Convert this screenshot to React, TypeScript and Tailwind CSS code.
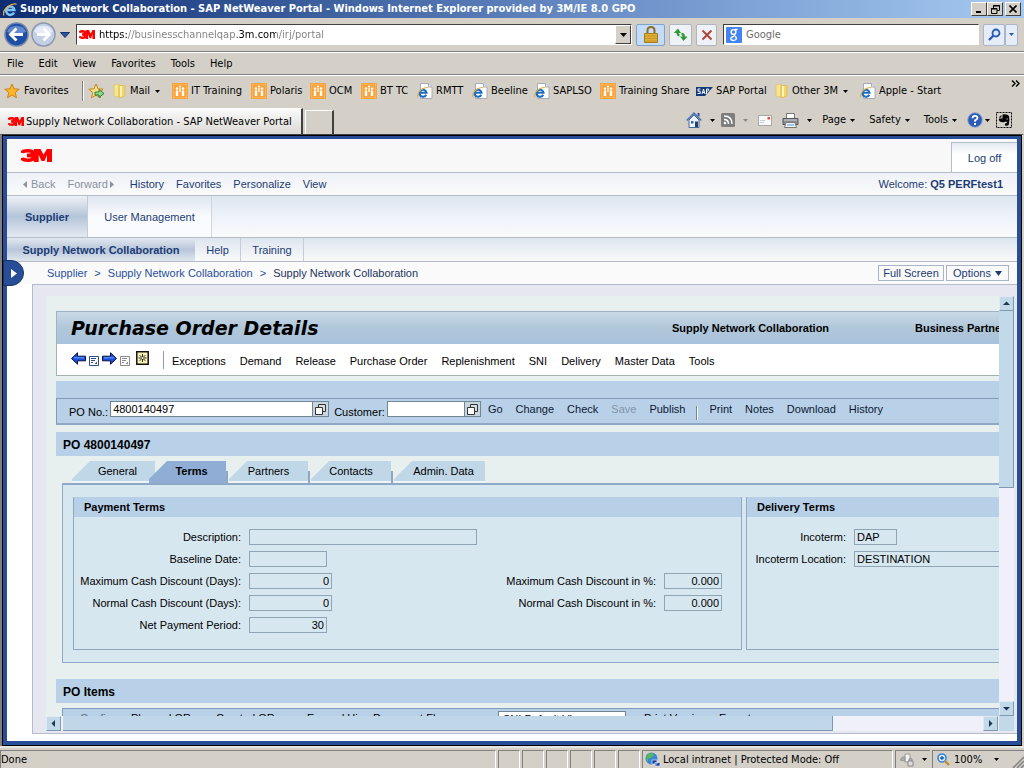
import React from "react";

type Kids = { children?: React.ReactNode };

const Caret = ({ className = "text-black" }: { className?: string }) => (
  <svg width="5" height="3" viewBox="0 0 5 3" className={className} aria-hidden="true">
    <path d="M0 0h5L2.5 3z" fill="currentColor" />
  </svg>
);

const Logo3M = ({ w, h }: { w: number; h: number }) => (
  <svg width={w} height={h} viewBox="0 0 31 14" preserveAspectRatio="none" aria-label="3M" role="img">
    <path d="M1 4.200Q1.500 2 6.500 2 12 2 12 4.500T6 6.900q6.500 0 6.500 2.700T6.500 12Q1.500 12 1 9.600" fill="none" stroke="#f00" strokeWidth="3.800" />
    <path d="M13 0h6.500l3 6L26 0h5v14h-5V6.500L23.500 13h-3l-2.800-6.500V14H13z" fill="#f00" />
  </svg>
);

const IeIcon = ({ size = 16, page = true }: { size?: number; page?: boolean }) => (
  <svg width={size} height={size} viewBox="0 0 16 16" aria-hidden="true">
    {page && <path d="M3.500.5h8l3.500 3.500v11.500H3.500z" fill="#fff" stroke="#a3adba" />}
    {page && <path d="M11.500.5v3.500H15" fill="#dfe8f2" stroke="#a3adba" />}
    <g transform={page ? "translate(0 3) scale(.78)" : undefined}>
      <path d="M11.800 11.200A4.500 4.500 0 1 1 12.200 8.600H4.200" fill="none" stroke={page ? "#1d6cc0" : "#7cc4f5"} strokeWidth="2.700" />
      <path d="M1 14.500C-1.500 9 8 .5 14.500 2.200" fill="none" stroke="#e8b040" strokeWidth="1.300" />
    </g>
  </svg>
);

const PeopleIcon = () => (
  <svg width="16" height="16" viewBox="0 0 16 16" aria-hidden="true">
    <rect width="16" height="16" rx="1" fill="#f28a1a" />
    <rect x="1" y="1" width="14" height="14" fill="#fba238" stroke="#ffc879" strokeWidth=".8" />
    <g fill="#fff">
      <circle cx="5" cy="5.500" r="1.300" /><circle cx="11" cy="5.500" r="1.300" /><circle cx="8" cy="3.500" r="1.100" />
      <path d="M3.800 7.400h2.400V13H3.800zM9.800 7.400h2.400V13H9.800zM7.300 5.300h1.400V9H7.300z" />
    </g>
  </svg>
);

const FolderIcon = () => (
  <svg width="14" height="16" viewBox="0 0 14 16" aria-hidden="true">
    <path d="M1 2l5-1v13l-5-1z" fill="#f9e58f" stroke="#e0c566" strokeWidth=".8" />
    <path d="M6 2.500h6V13l-6 2z" fill="#f3d468" stroke="#dcbb52" strokeWidth=".8" />
    <path d="M8 3v10.500" stroke="#fff4b8" strokeWidth="2" />
  </svg>
);

const StarIcon = ({ add }: { add?: boolean }) => (
  <svg width="17" height="16" viewBox="0 0 17 16" aria-hidden="true">
    <path d="M8 1l2 4.800 5.200.4-4 3.400 1.300 5.200L8 12l-4.500 2.800 1.300-5.200-4-3.400L6 5.800z" fill={add ? "#f6e08c" : "#fbb62a"} stroke="#cf8415" />
    {add && <path d="M7 9h4V6.500l5 4-5 4V12H7z" fill="#8fd68a" stroke="#1f7c22" strokeWidth=".9" />}
  </svg>
);

const SapIcon = () => (
  <svg width="17" height="9" viewBox="0 0 17 9" aria-hidden="true">
    <path d="M0 0h17L9 9H0z" fill="#123a7c" />
    <path d="M4.500 2H2v2.200h2.200V6.500H1.500M6 7l1.500-5L9 7M6.500 5.500h2M10.500 7V2h2q1.200 1.400-1.500 2.400" fill="none" stroke="#fff" />
  </svg>
);

const HomeIcon = () => (
  <svg width="16" height="16" viewBox="0 0 16 16" aria-hidden="true">
    <path d="M3 8v7.500h10V8L8 3z" fill="#eef3fb" stroke="#4668a0" />
    <path d="M.7 8.500L8 1.200l7.300 7.300" fill="none" stroke="#4f72b0" strokeWidth="1.600" />
    <path d="M11.500 1h2v4l-2-2z" fill="#27509b" /><path d="M5 9h2.500v2.500H5z" fill="#3c64a8" /><path d="M9 9.500h3V15H9z" fill="#223f74" />
  </svg>
);

const RssIcon = () => (
  <svg width="14" height="14" viewBox="0 0 14 14" aria-hidden="true">
    <rect width="14" height="14" rx="1.500" fill="#7d7d7d" />
    <path d="M3 3q8 0 8 8M3 6.500q4.500 0 4.500 4.500" fill="none" stroke="#fff" strokeWidth="1.500" />
    <circle cx="4" cy="10" r="1.300" fill="#fff" />
  </svg>
);

const MailIcon = () => (
  <svg width="14" height="11" viewBox="0 0 14 11" aria-hidden="true">
    <path d="M.5.5h13v10H.5z" fill="#fafafa" stroke="#a7a7a7" />
    <path d="M9.500 2h2.500v2.500H9.500z" fill="#e84a3a" /><path d="M2 5.500h5M2 7.500h4" stroke="#c8ccd4" />
  </svg>
);

const PrinterIcon = () => (
  <svg width="17" height="15" viewBox="0 0 17 15" aria-hidden="true">
    <path d="M4.500.5h8V6h-8z" fill="#fff" stroke="#777" />
    <path d="M1 5.500h15v6H1z" fill="#8b8f94" stroke="#55585c" />
    <path d="M2 7h13" stroke="#c9ccd0" /><path d="M4 9.500h9l1.500 5h-12z" fill="#f4f8fc" stroke="#777" /><path d="M5 12h7" stroke="#4e8fd0" />
  </svg>
);

const HelpIcon = () => (
  <svg width="16" height="16" viewBox="0 0 16 16" aria-hidden="true">
    <circle cx="8" cy="8" r="7.300" fill="#2a5cb8" stroke="#94a8cc" />
    <path d="M5.500 6.200Q5.600 3.800 8 3.800t2.500 2.200Q10.500 7.500 8 8.300v1.500" fill="none" stroke="#fff" strokeWidth="1.800" />
    <path d="M7 11h2v2H7z" fill="#fff" />
  </svg>
);

const ElephantIcon = () => (
  <svg width="16" height="16" viewBox="0 0 16 16" aria-hidden="true">
    <rect x=".5" y=".5" width="15" height="15" fill="none" stroke="#000" strokeDasharray="2 1" />
    <path d="M6.500 2.500q5-.6 6.500 1.500 1 4-.3 9-1.700 1.300-3.700.4-.6-2.400 2-2.400-.4-2-2-1.200-2.500 1.200-5.200-.3Q2.500 8 3 6.500h3.500z" fill="#000" />
    <path d="M2.800 5.500L5.400 2.900v2.600z" fill="#000" /><path d="M10.500 6.500h1.300v1h-1.300z" fill="#d4d0c8" />
  </svg>
);

const ValueHelp = () => (
  <svg width="11" height="11" viewBox="0 0 11 11" aria-hidden="true">
    <path d="M3.500.5h7v7h-7z" fill="#d6dcdf" stroke="#333" /><path d="M.5 3.500h7v7h-7z" fill="#fff" stroke="#333" />
  </svg>
);

const BlueArrow = ({ right }: { right?: boolean }) => (
  <svg width="15" height="13" viewBox="0 0 15 13" aria-hidden="true">
    <path d={right ? "M14.500 6.500L8.500.8v3.400H.5v4.600h8v3.400z" : "M.5 6.500L6.500.8v3.400h8v4.600h-8v3.400z"} fill="#1c4fe0" stroke="#07103c" />
    <path d={right ? "M2 5.800h10" : "M3 5.800h10"} stroke="#69a2ff" />
  </svg>
);

const ListIcon = ({ dim }: { dim?: boolean }) => (
  <svg width="10" height="10" viewBox="0 0 10 10" className={dim ? "text-[#888]" : "text-[#2a4c84]"} aria-hidden="true">
    <path d="M.5.5h9v9h-9z" fill="#fff" stroke="currentColor" />
    <path d="M2 2.500h5M2 4.500h4M2 6.500h2" stroke="currentColor" />
    <path d="M8 5.500V8H5.500z" fill="currentColor" />
  </svg>
);

const SunIcon = () => (
  <svg width="13" height="14" viewBox="0 0 13 14" aria-hidden="true">
    <path d="M.8.8h11.400v12.400H.8z" fill="#fbf3b4" stroke="#111" strokeWidth="1.500" />
    <path d="M6.500 3v8M2.500 7h8M3.700 4.200l5.600 5.600M9.300 4.200L3.700 9.800" stroke="#111" strokeWidth=".9" /><circle cx="6.500" cy="7" r="1" fill="#fff" />
  </svg>
);

const WinBtn = ({ label, children }: Kids & { label: string }) => (
  <button aria-label={label} className="flex h-[14px] w-4 items-center justify-center border border-t-white border-l-white border-r-[#404040] border-b-[#404040] bg-[#d4d0c8]">
    {children}
  </button>
);

const ToolBtn = ({ label, className, children }: Kids & { label: string; className: string }) => (
  <button aria-label={label} className={`flex h-[22px] items-center justify-center rounded-xs border ${className}`}>{children}</button>
);

const favs: { icon: React.ReactNode; label: string; caret?: boolean; w: string }[] = [
  { icon: <FolderIcon />, label: "Mail", caret: true, w: "w-[59px]" },
  { icon: <PeopleIcon />, label: "IT Training", w: "w-[79px]" },
  { icon: <PeopleIcon />, label: "Polaris", w: "w-[59px]" },
  { icon: <PeopleIcon />, label: "OCM", w: "w-[51px]" },
  { icon: <PeopleIcon />, label: "BT TC", w: "w-[56px]" },
  { icon: <IeIcon />, label: "RMTT", w: "w-[55px]" },
  { icon: <IeIcon />, label: "Beeline", w: "w-[62px]" },
  { icon: <IeIcon />, label: "SAPLSO", w: "w-[66px]" },
  { icon: <PeopleIcon />, label: "Training Share", w: "w-[96px]" },
  { icon: <SapIcon />, label: "SAP Portal", w: "w-[79px]" },
  { icon: <FolderIcon />, label: "Other 3M", caret: true, w: "w-[85px]" },
  { icon: <IeIcon />, label: "Apple - Start", w: "w-[90px]" },
];

const Chrome = () => (
  <header className="shrink-0">
    <div className="flex h-[18px] items-center gap-[2px] bg-linear-to-r from-[#0d2c72] via-[#6c90c8] via-60% to-[#a6caf0] px-[3px]">
      <IeIcon size={15} page={false} />
      <h1 className="flex-1 truncate text-[11px] font-bold text-white">
        Supply Network Collaboration - SAP NetWeaver Portal - Windows Internet Explorer provided by 3M/IE 8.0 GPO
      </h1>
      <div className="flex">
        <WinBtn label="Minimize"><svg width="8" height="8"><path d="M1 6h5v2H1z" /></svg></WinBtn>
        <WinBtn label="Restore"><svg width="9" height="9" fill="none" stroke="#000"><path d="M2.500 3V.5h6v5H6M2 1h7M.5 3.500h5.500v5H.5zM0 4h6" /></svg></WinBtn>
      </div>
      <WinBtn label="Close"><svg width="8" height="8"><path d="M.5.5l7 7m0-7l-7 7" stroke="#000" strokeWidth="1.600" /></svg></WinBtn>
    </div>

    <div className="flex h-[34px] items-center gap-1 border-b border-[#808080] px-1">
      <div className="flex items-center">
        <button aria-label="Back">
          <svg width="25" height="25" viewBox="0 0 25 25"><circle cx="12.500" cy="12.500" r="11.500" fill="#1f4fa4" stroke="#7186ad" strokeWidth="1.500" /><path d="M3 10a10 9 0 0 1 19 0q-10 4-19 0" fill="#7fa3dc" opacity=".7" /><path d="M12.500 6.500l-6 6 6 6M7 12.500h12" fill="none" stroke="#fff" strokeWidth="2.800" /></svg>
        </button>
        <button aria-label="Forward" className="ml-[2px]">
          <svg width="25" height="25" viewBox="0 0 25 25"><circle cx="12.500" cy="12.500" r="11.500" fill="#c3cfe4" stroke="#8b98b0" strokeWidth="1.500" /><path d="M3 10a10 9 0 0 1 19 0q-10 4-19 0" fill="#eef3fb" opacity=".8" /><path d="M12.500 6.500l6 6-6 6M18 12.500H6" fill="none" stroke="#fff" strokeWidth="2.800" /></svg>
        </button>
        <button aria-label="Recent pages" className="ml-1">
          <svg width="10" height="6"><path d="M.5.5h9L5 5.500z" fill="#2a55a5" stroke="#16336b" /></svg>
        </button>
      </div>
      <div className="ml-[2px] flex h-[21px] flex-1 items-center gap-1 border border-t-[#404040] border-l-[#404040] border-r-white border-b-white bg-white pl-[2px]">
        <Logo3M w={16} h={9} />
        <input
          aria-label="Address"
          defaultValue="https://businesschannelqap.3m.com/irj/portal"
          className="min-w-0 flex-1 bg-[linear-gradient(90deg,#000_29px,#808080_29px,#808080_138px,#000_138px,#000_177px,#808080_177px)] bg-clip-text text-transparent outline-none"
        />
        <button aria-label="Show addresses" className="flex h-[19px] w-4 items-center justify-center border border-t-white border-l-white border-r-[#404040] border-b-[#404040] bg-[#d4d0c8]">
          <svg width="7" height="4"><path d="M0 0h7L3.500 4z" /></svg>
        </button>
      </div>
      <ToolBtn label="Security report" className="w-[29px] border-[#7da2ce] bg-[#c5dcf8]">
        <svg width="14" height="17" viewBox="0 0 14 17"><path d="M3.500 8V4.500q0-3.500 3.500-3.500t3.500 3.500V8" fill="none" stroke="#8d6d20" strokeWidth="2" /><path d="M.5 7.500h13v9H.5z" fill="#e4b035" stroke="#a57c1e" /><path d="M1 10h12M1 12.500h12M1 15h12" stroke="#b98a22" strokeWidth=".8" /></svg>
      </ToolBtn>
      <ToolBtn label="Refresh" className="w-[23px] border-[#b0b6c0] bg-[#eef1f6]">
        <svg width="15" height="14" viewBox="0 0 15 14" fill="#2e9a34"><path d="M5 .5L.8 5h2.700q0 3 3 3.500V6Q5.500 6 5.700 5H8z" /><path d="M10.500 13l4-4.500H12q0-3.500-3.500-3.700v2.400q1.300 0 1.300 1.300H7z" /></svg>
      </ToolBtn>
      <ToolBtn label="Stop" className="w-[21px] border-[#b0b6c0] bg-[#eef1f6]">
        <svg width="12" height="12" viewBox="0 0 12 12"><path d="M1.500 1.500l9 9m0-9l-9 9" stroke="#b0463a" strokeWidth="2" /></svg>
      </ToolBtn>
      <div className="ml-[2px] flex h-[21px] w-64 items-center gap-1 border border-t-[#404040] border-l-[#404040] border-r-white border-b-white bg-white pl-[2px]">
        <svg width="16" height="16" viewBox="0 0 16 16" aria-hidden="true"><rect width="16" height="16" rx="1" fill="#4484f0" /><circle cx="7.500" cy="5" r="2.400" fill="none" stroke="#fff" strokeWidth="1.400" /><path d="M9 2.500h2.500M9 7q-2 1 0 2 2 1.500 1 3.500-3 2-5 0-1-2.500 3-3" fill="none" stroke="#fff" strokeWidth="1.300" /></svg>
        <input aria-label="Search" placeholder="Google" className="min-w-0 flex-1 outline-none placeholder:text-[#6b6b6b]" />
      </div>
      <div className="flex pr-[2px]">
        <ToolBtn label="Search" className="w-[22px] border-[#a9b5c8] bg-[#e6edf8]">
          <svg width="13" height="13" viewBox="0 0 13 13"><circle cx="8" cy="5" r="3.500" fill="#dceafc" stroke="#2759b5" strokeWidth="1.800" /><path d="M5.500 7.500L1 12" stroke="#2759b5" strokeWidth="2.300" /></svg>
        </ToolBtn>
        <ToolBtn label="Search options" className="w-[13px] border-[#a9b5c8] bg-[#e6edf8]"><Caret className="text-[#2759b5]" /></ToolBtn>
      </div>
    </div>

    <nav className="flex h-[23px] items-center gap-[15px] border-t border-b border-t-white border-b-[#808080] px-[7px]">
      {["File", "Edit", "View", "Favorites", "Tools", "Help"].map((m) => <button key={m}>{m}</button>)}
    </nav>

    <div className="flex h-[31px] items-center border-t border-white pl-1">
      <button className="flex w-[78px] items-center gap-[3px] whitespace-nowrap"><StarIcon />Favorites</button>
      <div className="h-5 w-[2px] border-l border-[#808080] bg-white" />
      <button aria-label="Add to Favorites" className="mx-1"><StarIcon add /></button>
      <div className="flex flex-1 items-center pl-1">
        {favs.map((f) => (
          <button key={f.label} className={`flex shrink-0 items-center gap-[3px] whitespace-nowrap ${f.w}`}>
            {f.icon}{f.label}{f.caret && <span className="ml-[2px]"><Caret /></span>}
          </button>
        ))}
      </div>
      <button aria-label="More favorites" className="self-start px-1 pt-1">
        <svg width="9" height="7" fill="none" stroke="#000" strokeWidth="1.400"><path d="M1 .5l3 3-3 3M5 .5l3 3-3 3" /></svg>
      </button>
    </div>

    <div className="flex h-7 items-stretch">
      <button className="mt-[2px] flex w-[303px] items-center gap-[2px] whitespace-nowrap border-t border-r-2 border-t-white border-r-[#404040] bg-linear-to-b from-[#fafafa] to-[#dcdad6] pl-2">
        <Logo3M w={16} h={9} />Supply Network Collaboration - SAP NetWeaver Portal
      </button>
      <button aria-label="New tab" className="mt-1 ml-[2px] w-[29px] border-t border-l border-r-2 border-t-white border-l-white border-r-[#404040]" />
      <div className="flex flex-1 items-center justify-end gap-[6px] pr-3">
        <button aria-label="Home" className="flex items-center gap-2"><HomeIcon /><Caret /></button>
        <button aria-label="Feeds" className="flex items-center gap-2"><RssIcon /><Caret className="text-[#888]" /></button>
        <button aria-label="Read mail" className="px-1"><MailIcon /></button>
        <button aria-label="Print" className="flex items-center gap-2"><PrinterIcon /><Caret /></button>
        {["Page", "Safety", "Tools"].map((t) => (
          <button key={t} className="flex items-center gap-1 px-1">{t}<Caret /></button>
        ))}
        <button aria-label="Help" className="flex items-center gap-[2px]"><HelpIcon /><Caret /></button>
        <button aria-label="Clip page"><ElephantIcon /></button>
      </div>
    </div>
  </header>
);

const PortalHeader = () => (
  <div className="shrink-0 text-[#1c3c74]">
    <div className="flex h-[34px] border-b border-[#b4bcc8] bg-[#f8f8f8]">
      <div className="flex flex-1 items-center pl-[14px]"><Logo3M w={31} h={13} /></div>
      <button className="mt-[3px] w-[66px] border-t border-l border-[#b4bcc8] bg-linear-to-b from-[#e4e9f0] to-white to-40%">Log off</button>
    </div>
    <div className="flex h-[23px] items-center gap-3 border-b border-[#b4bcc8] bg-linear-to-b from-[#eef1f8] to-[#fafafa] pr-[14px] pl-4">
      <button className="flex items-center gap-1 text-[#8a929c]"><svg width="4" height="7"><path d="M4 0v7L0 3.500z" fill="currentColor" /></svg>Back</button>
      <button className="flex items-center gap-[2px] text-[#8a929c]">Forward<svg width="4" height="7"><path d="M0 0v7l4-3.500z" fill="currentColor" /></svg></button>
      <button className="ml-1">History</button>
      <button>Favorites</button>
      <button>Personalize</button>
      <button>View</button>
      <p className="flex-1 text-right">Welcome: <b>Q5 PERFtest1</b></p>
    </div>
    <nav className="flex h-[42px] border-b border-[#b4bcc8] bg-linear-to-b from-[#dde5ee] via-[#eef2fa] to-[#fafafa]">
      <button className="w-[81px] border-r border-[#c4ccd8] bg-linear-to-b from-[#eef1f6] via-[#b4c4d8] to-[#e4eaf2] font-bold">Supplier</button>
      <button className="w-[124px] border-r border-[#d0d6e0] bg-linear-to-b from-[#dfe6ef] to-[#fafbff] to-50%">User Management</button>
    </nav>
    <nav className="flex h-6 border-b border-[#b4bcc8] bg-linear-to-b from-[#dde5ee] to-[#fafafa]">
      <button className="w-[188px] bg-linear-to-b from-[#e2e8f0] via-[#b8c6da] to-[#dfe6ef] font-bold">Supply Network Collaboration</button>
      <button className="w-[46px] border-r border-[#c4ccd8]">Help</button>
      <button className="w-[63px] border-r border-[#c4ccd8]">Training</button>
    </nav>
  </div>
);

const BarButton = ({ children, disabled }: Kids & { disabled?: boolean }) => (
  <button disabled={disabled} className="whitespace-nowrap text-[#0c1a33] disabled:text-[#8496a8]">{children}</button>
);

const Lookup = ({ id, label, value, w }: { id: string; label: string; value?: string; w: string }) => (
  <div className="flex items-center gap-[2px]">
    <label htmlFor={id} className="pt-[5px] text-black">{label}</label>
    <div className={`flex h-4 border border-[#6f8794] ${w}`}>
      <input id={id} defaultValue={value} className="min-w-0 flex-1 bg-white px-[2px] text-black outline-none" />
      <button aria-label={`Find ${label}`} className="flex w-4 items-center justify-center border-l border-[#6f8794] bg-[#c9d6dd]"><ValueHelp /></button>
    </div>
  </div>
);

const Field = ({ id, label, value, w, right, labelW }: { id: string; label: string; value?: string; w: string; right?: boolean; labelW: string }) => (
  <div className="flex h-[22px] items-center gap-2">
    <label htmlFor={id} className={`shrink-0 whitespace-nowrap text-right ${labelW}`}>{label}</label>
    <input id={id} readOnly defaultValue={value} className={`h-4 shrink-0 border border-[#8fa5b5] bg-transparent px-[2px] outline-none ${w} ${right ? "text-right" : ""}`} />
  </div>
);

const tabs = [
  { label: "General", w: "w-[83px] pl-2", rule: false },
  { label: "Terms", w: "w-[77px]", rule: false },
  { label: "Partners", w: "w-[79px]", rule: true },
  { label: "Contacts", w: "w-[80px]", rule: true },
  { label: "Admin. Data", w: "w-[91px] pl-2", rule: true },
];

const Orders = () => (
  <div className="min-w-0 flex-1 overflow-hidden bg-[#e7f0ef] pt-[15px] pl-[10px] text-black">
    <div className="flex h-[33px] items-center border-t border-l border-[#9fb3c0] bg-linear-to-b from-[#cad9e8] via-[#b0c7d9] to-[#a9c2dd] pl-[14px]">
      <h2 className="w-[601px] shrink-0 font-['DejaVu_Sans',sans-serif] text-[19px] leading-6 font-bold italic">Purchase Order Details</h2>
      <b className="w-[243px] shrink-0 whitespace-nowrap">Supply Network Collaboration</b>
      <b className="shrink-0 whitespace-nowrap">Business Partner</b>
    </div>
    <div className="flex h-8 items-center border-b border-l border-[#a3b4b0] bg-white pl-[14px]">
      <div className="flex w-[92px] items-end gap-1 pb-[2px]">
        <div className="flex items-center gap-[3px]">
          <button aria-label="Previous"><BlueArrow /></button><button aria-label="Previous list" className="pt-[5px]"><ListIcon /></button>
          <button aria-label="Next"><BlueArrow right /></button><button aria-label="Next list" className="pt-[5px]"><ListIcon dim /></button>
        </div>
        <button aria-label="New" className="ml-[2px] self-start"><SunIcon /></button>
      </div>
      <nav className="flex items-center whitespace-nowrap">
        <span className="mr-2 h-[18px] border-l border-[#8f9fae]" />
        <div className="flex gap-[14px] pt-[2px]">
          {["Exceptions", "Demand", "Release", "Purchase Order", "Replenishment", "SNI", "Delivery", "Master Data", "Tools"].map((m) => (
            <button key={m}>{m}</button>
          ))}
        </div>
      </nav>
    </div>
    <div className="mt-[5px] h-[17px] bg-[#b8d0e8]" />
    <div className="flex h-[27px] items-center gap-[5px] border-t border-b-2 border-l border-t-[#7f9bb8] border-b-[#8fa8c4] border-l-[#7f9bb8] bg-[#b8d0e8] pb-1 pl-3">
      <Lookup id="po" label="PO No.:" value="4800140497" w="w-[219px]" />
      <Lookup id="cust" label="Customer:" w="w-[94px]" />
      <div className="ml-[2px] flex items-center gap-[13px]">
        <BarButton>Go</BarButton><BarButton>Change</BarButton><BarButton>Check</BarButton>
        <BarButton disabled>Save</BarButton><BarButton>Publish</BarButton>
        <span className="-mx-[2px] mt-2 h-[14px] w-[2px] border-l border-[#6f8794] bg-white" />
        <BarButton>Print</BarButton><BarButton>Notes</BarButton><BarButton>Download</BarButton><BarButton>History</BarButton>
      </div>
    </div>
    <h3 className="mt-[7px] h-6 bg-[#b8d0e8] pl-[7px] text-[12px] leading-[26px] font-bold">PO 4800140497</h3>

    <div className="mt-[5px] flex h-[22px] pl-4" role="tablist">
      {tabs.map((t) =>
        t.label === "Terms" ? (
          <button key={t.label} role="tab" aria-selected="true" className={`z-10 -ml-[6px] bg-[#8fadd5] pb-[2px] pl-2 font-bold [clip-path:polygon(18px_0,100%_0,100%_100%,0_100%,0_18px)] ${t.w}`}>{t.label}</button>
        ) : (
          <div key={t.label} className="flex items-end">
            {t.rule && <span className="mr-[1px] h-3 w-[2px] bg-[#8fa8c0]" />}
            <button role="tab" aria-selected="false" className={`h-full border-b-2 border-[#edf4f6] bg-[#c0d7e7] [clip-path:polygon(18px_0,100%_0,100%_100%,0_100%,0_18px)] ${t.w}`}>{t.label}</button>
          </div>
        )
      )}
    </div>
    <section className="ml-[6px] flex h-[180px] gap-1 border-t-2 border-b border-l border-[#8fa8c8] bg-[#d7e7f0] pt-3 pb-3 pl-[10px]">
      <div className="flex w-[669px] shrink-0 flex-col border-r border-b border-l border-[#8fa8c0]">
        <h4 className="h-5 bg-[#b8cfe8] pl-[10px] leading-5 font-bold">Payment Terms</h4>
        <div className="flex pt-[9px]">
          <div className="w-[423px]">
            <Field id="desc" label="Description:" w="w-[228px]" labelW="w-[167px]" />
            <Field id="base" label="Baseline Date:" w="w-[78px]" labelW="w-[167px]" />
            <Field id="maxd" label="Maximum Cash Discount (Days):" value="0" right w="w-[83px]" labelW="w-[167px]" />
            <Field id="nord" label="Normal Cash Discount (Days):" value="0" right w="w-[83px]" labelW="w-[167px]" />
            <Field id="net" label="Net Payment Period:" value="30" right w="w-[78px]" labelW="w-[167px]" />
          </div>
          <div className="pt-11">
            <Field id="maxp" label="Maximum Cash Discount in %:" value="0.000" right w="w-[58px]" labelW="w-[159px]" />
            <Field id="norp" label="Normal Cash Discount in %:" value="0.000" right w="w-[58px]" labelW="w-[159px]" />
          </div>
        </div>
      </div>
      <div className="w-[400px] shrink-0 border-b border-l border-[#8fa8c0]">
        <h4 className="h-5 bg-[#b8cfe8] pl-[10px] leading-5 font-bold">Delivery Terms</h4>
        <div className="pt-[9px]">
          <Field id="inco" label="Incoterm:" value="DAP" w="w-[43px]" labelW="w-[99px]" />
          <Field id="loc" label="Incoterm Location:" value="DESTINATION" w="w-[228px]" labelW="w-[99px]" />
        </div>
      </div>
    </section>
    <h3 className="mt-4 h-6 bg-[#b8d0e8] pl-[7px] text-[12px] leading-[26px] font-bold">PO Items</h3>
    <div className="mt-[5px] ml-[6px] flex h-8 items-start border-t border-l border-[#7f9bb8] bg-[#b8d0e8] pl-[17px] whitespace-nowrap">
      <div className="grid grid-cols-[51px_85px_91px_191px_146px_75px_60px] items-start justify-items-start pt-[2px]">
        <button className="text-[#5a6c80]">Configure</button>
        <button>Planned GRs</button>
        <button>Created GRs</button>
        <button>Expand Hier. Document Flow</button>
        <select aria-label="View" className="h-4 w-32 border border-[#6f8794] bg-white"><option>SNI Default View</option></select>
        <button>Print Version</button>
        <button>Export</button>
      </div>
    </div>
  </div>
);

const ScrollBtn = ({ label, d }: { label: string; d: string }) => (
  <button aria-label={label} className="flex size-[15px] shrink-0 items-center justify-center border border-t-[#dfeaf2] border-l-[#dfeaf2] border-r-[#7f98b0] border-b-[#7f98b0] bg-[#c2d9ea]">
    <svg width="7" height="7"><path d={d} fill="#1f3550" /></svg>
  </button>
);

const Portal = () => (
  <main className="flex min-h-0 flex-1 border-x-2 border-t border-l-[#808080] border-t-[#404040] border-r-[#d4d0c8]">
    <div className="flex min-h-0 min-w-0 flex-1 flex-col border border-black">
      <div className="flex min-h-0 min-w-0 flex-1 flex-col border-4 border-t-3 border-[#284e98] bg-white font-['Liberation_Sans',Arial,sans-serif]">
        <PortalHeader />
        <div className="flex h-[22px] shrink-0 items-center bg-[#fafafa]">
          <button aria-label="Show navigation" className="z-10 -ml-1 flex h-[26px] w-[21px] items-center justify-center rounded-r-full border border-[#16336b] bg-[#284e98]">
            <svg width="6" height="9"><path d="M0 0l6 4.500L0 9z" fill="#fff" /></svg>
          </button>
          <nav className="ml-[23px] flex flex-1 gap-[7px] text-[#28509c]">
            <a href="#supplier">Supplier</a><span>&gt;</span>
            <a href="#snc">Supply Network Collaboration</a><span>&gt;</span>
            <a href="#page" className="text-[#1c3460]">Supply Network Collaboration</a>
          </nav>
          <div className="flex gap-[2px] pr-2 text-[#1c3c74]">
            <button className="h-4 w-[66px] border border-[#a9b5c4]">Full Screen</button>
            <button className="flex h-4 w-[63px] items-center justify-center gap-1 border border-[#a9b5c4]">Options<svg width="7" height="5"><path d="M0 0h7L3.500 5z" fill="currentColor" /></svg></button>
          </div>
        </div>
        <div className="mb-[7px] ml-[25px] flex min-h-0 flex-1 flex-col border-t border-b border-l border-[#b4bccc] bg-[#e6e7f0] pt-[11px] pr-[3px] pb-[2px] pl-[13px]">
          <div className="flex min-h-0 flex-1">
            <Orders />
            <div className="flex w-[15px] flex-col bg-[#f0f0fa]">
              <ScrollBtn label="Scroll up" d="M0 5h7L3.500 1.500z" />
              <div className="h-[177px] border-r border-b border-[#7f98b0] bg-[#c2d9ea]" />
              <div className="flex-1" />
              <ScrollBtn label="Scroll down" d="M0 2h7L3.500 5.500z" />
            </div>
          </div>
          <div className="flex h-[15px] shrink-0 bg-[#f0f0fa]">
            <ScrollBtn label="Scroll left" d="M5 0v7L1.500 3.500z" />
            <div className="ml-[2px] w-[770px] border-r border-b border-[#7f98b0] bg-[#c0d7ea]" />
            <div className="flex-1" />
            <ScrollBtn label="Scroll right" d="M2 0v7l3.500-3.500z" />
            <div className="ml-[1px] w-[15px] bg-[#c2d9ea]" />
          </div>
        </div>
      </div>
    </div>
  </main>
);

const StatusBar = () => (
  <footer className="flex h-[22px] shrink-0 items-stretch gap-[2px] border-t-2 border-[#e8e4e0] pt-[2px]">
    <div className="flex flex-1 items-center border-t border-l border-r-[#fff] border-r border-t-[#808080] border-l-[#808080]">Done</div>
    {[0, 1, 2, 3, 4, 5].map((i) => (
      <div key={i} className="w-[22px] border-t border-r border-l border-t-[#808080] border-r-white border-l-[#808080]" />
    ))}
    <div className="flex w-[251px] items-center gap-[2px] border-t border-r border-l border-t-[#808080] border-r-white border-l-[#808080] pl-[2px] whitespace-nowrap">
      <svg width="16" height="15" viewBox="0 0 16 15" aria-hidden="true"><circle cx="6.500" cy="6.500" r="6" fill="#3a86d8" /><path d="M3 2q4-2 6 0-1 4-4 4T3 11Q-.5 7 3 2" fill="#58b85a" /><path d="M7 8h5v4H7zM10 10.500h5V14h-5z" fill="#173f9c" stroke="#dfe9f8" strokeWidth=".7" /></svg>
      Local intranet | Protected Mode: Off
    </div>
    <button aria-label="InPrivate filtering" className="flex w-[35px] items-center justify-center gap-2 border-t border-l border-[#808080]">
      <svg width="14" height="14" viewBox="0 0 14 14"><path d="M5 1h5v8H5z" fill="#f4f4f4" stroke="#999" /><path d="M0 7q2-4 5-3v4zM9 8V6q1.500-2 3 0v2" fill="#aaa" stroke="#999" /><path d="M8 8h5v5H8z" fill="#ddd" stroke="#888" /></svg>
      <Caret />
    </button>
    <button className="flex w-[92px] items-center gap-1 border-t border-l border-[#808080] pl-1">
      <svg width="13" height="13" viewBox="0 0 13 13" aria-hidden="true"><circle cx="5" cy="5" r="4" fill="#d8ecff" stroke="#3a84d8" strokeWidth="1.600" /><path d="M8 8l4 4" stroke="#c88a30" strokeWidth="2.400" /><path d="M5 3v4M3 5h4" stroke="#1c5cb8" strokeWidth="1.300" /></svg>
      100%<span className="ml-2"><Caret /></span>
      <svg width="12" height="12" className="ml-auto self-end" aria-hidden="true"><path d="M1 12L12 1M5 12l7-7M9 12l3-3" stroke="#808080" strokeWidth="1.500" /></svg>
    </button>
  </footer>
);

export default function App() {
  return (
    <div className="flex h-screen flex-col overflow-hidden bg-[#d4d0c8] font-['DejaVu_Sans_Condensed','DejaVu_Sans',sans-serif] text-[11px] leading-[14px] text-black">
      <Chrome />
      <Portal />
      <StatusBar />
    </div>
  );
}
